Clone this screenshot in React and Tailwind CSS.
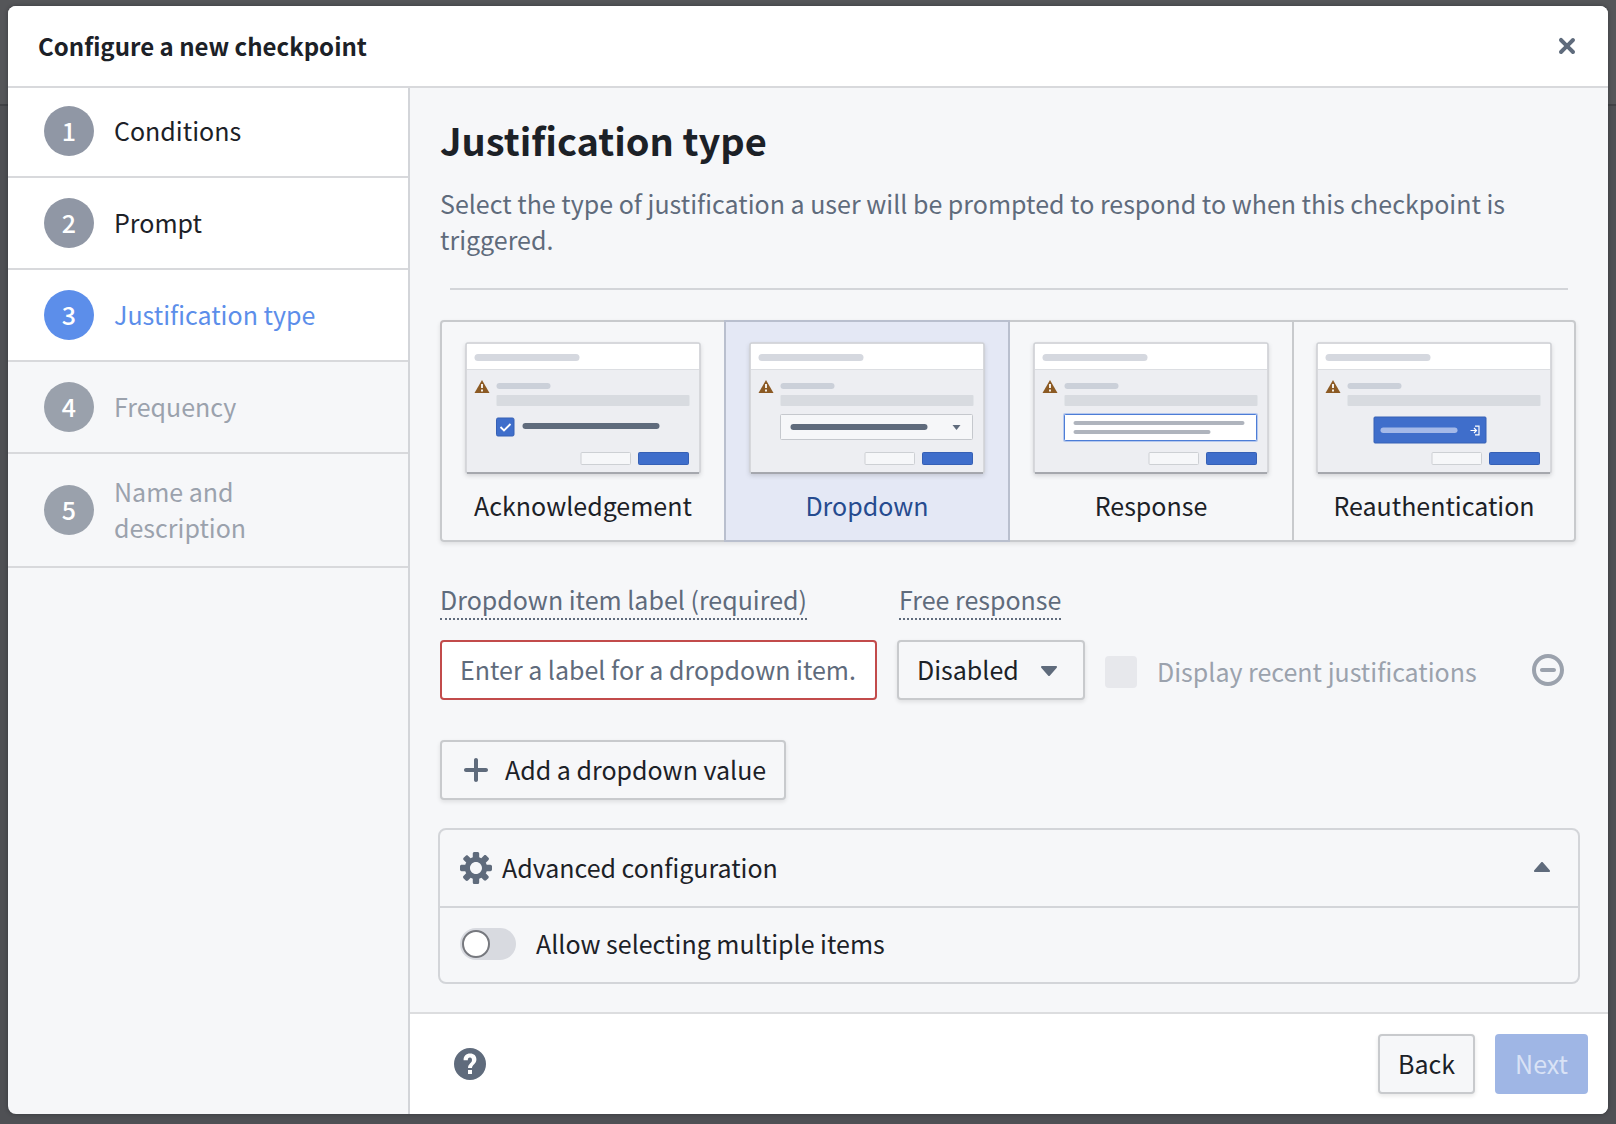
import { useState } from 'react'
import clsx from 'clsx'

const STEPS = [
    { id: 1, title: 'Conditions', status: 'done' },
    { id: 2, title: 'Prompt', status: 'done' },
    { id: 3, title: 'Justification type', status: 'active' },
    { id: 4, title: 'Frequency', status: 'upcoming' },
    { id: 5, title: 'Name and description', status: 'upcoming' },
]

const TYPES = ['Acknowledgement', 'Dropdown', 'Response', 'Reauthentication']

const ICONS = {
    cross: 'M9.41 8l2.29-2.29c.19-.18.3-.43.3-.71a1.003 1.003 0 00-1.71-.71L8 6.59l-2.29-2.3a1.003 1.003 0 00-1.42 1.42L6.59 8 4.3 10.29c-.19.18-.3.43-.3.71a1.003 1.003 0 001.71.71L8 9.41l2.29 2.29c.18.19.43.3.71.3a1.003 1.003 0 00.71-1.71L9.41 8z',
    plus: 'M13 7H9V3c0-.55-.45-1-1-1s-1 .45-1 1v4H3c-.55 0-1 .45-1 1s.45 1 1 1h4v4c0 .55.45 1 1 1s1-.45 1-1V9h4c.55 0 1-.45 1-1s-.45-1-1-1z',
    cog: 'M15.19 6.39h-1.85c-.11-.37-.27-.71-.45-1.04l1.36-1.36c.31-.31.31-.82 0-1.13l-1.13-1.13c-.31-.31-.82-.31-1.13 0l-1.36 1.36c-.33-.17-.67-.33-1.04-.44V.79c0-.44-.36-.8-.8-.8h-1.6c-.44 0-.8.36-.8.8v1.86c-.39.12-.75.28-1.1.47l-1.3-1.3c-.3-.3-.79-.3-1.09 0L1.82 2.91c-.3.3-.3.79 0 1.09l1.3 1.3c-.2.34-.36.7-.48 1.09H.79c-.44 0-.8.36-.8.8v1.6c0 .44.36.8.8.8h1.85c.11.37.27.71.45 1.04l-1.36 1.36c-.31.31-.31.82 0 1.13l1.13 1.13c.31.31.82.31 1.13 0l1.36-1.36c.33.18.67.33 1.04.44v1.86c0 .44.36.8.8.8h1.6c.44 0 .8-.36.8-.8v-1.86c.39-.12.75-.28 1.1-.47l1.3 1.3c.3.3.79.3 1.09 0l1.09-1.09c.3-.3.3-.79 0-1.09l-1.3-1.3c.19-.35.36-.71.48-1.1h1.85c.44 0 .8-.36.8-.8v-1.6a.816.816 0 00-.81-.79zm-7.2 4.6c-1.66 0-3-1.34-3-3s1.34-3 3-3 3 1.34 3 3-1.34 3-3 3z',
    caretDown: 'M12 6.5c0-.28-.22-.5-.5-.5h-7a.495.495 0 00-.37.83l3.5 4c.09.1.22.17.37.17s.28-.07.37-.17l3.5-4c.08-.09.13-.2.13-.33z',
    caretUp: 'M11.87 9.17l-3.5-4C8.28 5.07 8.15 5 8 5s-.28.07-.37.17l-3.5 4a.495.495 0 00.37.83h7a.495.495 0 00.37-.83z',
    remove: 'M10.99 7h-6c-.55 0-1 .45-1 1s.45 1 1 1h6c.55 0 1-.45 1-1s-.45-1-1-1zM8 0C3.58 0 0 3.58 0 8s3.58 8 8 8 8-3.58 8-8-3.58-8-8-8zm0 14c-3.31 0-6-2.69-6-6s2.69-6 6-6 6 2.69 6 6-2.69 6-6 6z',
    help: 'M8 0a8 8 0 100 16A8 8 0 008 0zM7 13v-2h2v2H7zm0-3c0-2.2 2-2.3 2-4 0-.8-.3-1.3-1-1.3-.8 0-1.1.5-1.1 1.4H4.8C4.8 4 6 2.8 8.1 2.8c1.9 0 3.1 1.1 3.1 2.9C11.200 8 9 8.200 9 10H7z',
}

function Icon({ name, className }) {
    return (
        <svg viewBox="0 0 16 16" aria-hidden="true" className={clsx('size-8 shrink-0 fill-current', className)}>
            <path fillRule="evenodd" d={ICONS[name]} />
        </svg>
    )
}

function Preview({ type }) {
    return (
        <svg
            viewBox="0 0 236 132"
            aria-hidden="true"
            className="h-[132px] w-[236px] drop-shadow-[0_2px_2px_rgba(17,20,24,0.15)]"
        >
            <rect x="1" y="1" width="234" height="130" rx="3" fill="#edeef2" />
            <path d="M2 2h232v25H2z" fill="#fff" />
            <path d="M2 27.500h232" stroke="#dcdee2" />
            <rect x="1" y="1" width="234" height="130" rx="2" fill="none" stroke="#cfd1d5" strokeWidth="1.500" />
            <path d="M2 131h232" stroke="#96999f" strokeWidth="1.500" />

            <g transform="translate(-0.5 0)">
                <rect x="10" y="12" width="105" height="7" rx="3.500" fill="#d5d8df" />
                <path d="M17.500 38 25 51H10z" fill="#8c5a24" />
                <path d="M17.500 42v4M17.500 47.500v2" stroke="#fff" strokeWidth="1.800" />
                <rect x="32" y="41" width="54" height="6" rx="3" fill="#cbd0d9" />
                <rect x="32" y="53" width="193" height="11" rx="1" fill="#d8dbe0" />

                {type === 'Acknowledgement' && (
                    <>
                        <rect x="32" y="76" width="17.500" height="18" rx="1.500" fill="#3f6ecb" stroke="#3660b5" />
                        <path d="m36 85 3.500 3.500 6.500-6.500" fill="none" stroke="#fff" strokeWidth="1.800" />
                        <rect x="58" y="81" width="137" height="6" rx="3" fill="#5f6b7c" />
                    </>
                )}
                {type === 'Dropdown' && (
                    <>
                        <rect x="32" y="72.500" width="192" height="25" rx="1" fill="#f6f7f9" stroke="#c5c8cd" />
                        <rect x="42" y="82" width="137" height="6" rx="3" fill="#5f6b7c" />
                        <path d="M204 83h8l-4 5z" fill="#5f6b7c" />
                    </>
                )}
                {type === 'Response' && (
                    <>
                        <rect x="30.500" y="71" width="195" height="29" rx="2" fill="#b5c8ee" />
                        <rect x="32" y="72.500" width="192" height="26" rx="1" fill="#fff" stroke="#4d7dd6" />
                        <rect x="41" y="79" width="171" height="4" rx="2" fill="#afb4bd" />
                        <rect x="41" y="88" width="137" height="4" rx="2" fill="#afb4bd" />
                    </>
                )}
                {type === 'Reauthentication' && (
                    <>
                        <rect x="58.500" y="75" width="112" height="26" rx="1" fill="#3f6ecb" stroke="#3660b5" />
                        <rect x="65" y="85.500" width="77" height="5.500" rx="2.750" fill="#a4b9e8" />
                        <path
                            d="M155 88.500h6m-2.500-2.500 2.500 2.500-2.500 2.500M159.500 84.200h4v8.600h-4"
                            fill="none"
                            stroke="#fff"
                            strokeWidth="1.200"
                        />
                    </>
                )}

                <rect x="116.500" y="110.500" width="49.500" height="12" rx="1" fill="#f6f7f9" stroke="#cdd0d4" />
                <rect x="174" y="110.500" width="50" height="12" rx="1" fill="#3f6ecb" stroke="#3660b5" />
            </g>
        </svg>
    )
}

function Step({ step }) {
    return (
        <li
            className={clsx(
                'flex min-h-[92px] items-center gap-5 border-b-2 border-[#d8d9dc] py-[19px] pl-9 pr-[90px]',
                step.status === 'upcoming' ? 'text-[#9ba2ad]' : 'bg-white',
                step.status === 'active' && 'text-[#5c8eea]',
            )}
            aria-current={step.status === 'active' ? 'step' : undefined}
        >
            <span
                className={clsx(
                    'flex size-[50px] shrink-0 items-center justify-center rounded-full pb-0.5 font-medium text-white',
                    step.status === 'done' && 'bg-[#9097a5]',
                    step.status === 'active' && 'bg-[#5c8eea]',
                    step.status === 'upcoming' && 'bg-[#9aa1ac]',
                )}
            >
                {step.id}
            </span>
            <span className="pb-0.5">{step.title}</span>
        </li>
    )
}

function App() {
    const [selected, setSelected] = useState('Dropdown')
    const [label, setLabel] = useState('')
    const [isOpen, setIsOpen] = useState(true)
    const [isMultiple, setIsMultiple] = useState(false)

    return (
        <div className="relative flex min-h-screen flex-col bg-[#4f5054] px-2 pt-1.5 pb-2.5 font-['Noto_Sans_CJK_SC','Source_Sans_3',sans-serif] text-[25px] leading-9 text-[#1c2127]">
            <div className="absolute inset-x-0 top-0 h-[106px] border-b-2 border-[#414246] bg-[#555659]" />

            <div
                role="dialog"
                aria-labelledby="dialog-title"
                className="relative flex flex-1 flex-col overflow-hidden rounded-lg bg-[#f6f7f9] shadow-[0_0_4px_rgba(17,20,24,0.4)]"
            >
                <header className="relative z-10 flex h-20 items-center justify-between bg-white pl-[30px] pr-[25px] shadow-[0_2px_0_#d8d9dc]">
                    <h1 id="dialog-title" className="text-2xl leading-9 font-bold">Configure a new checkpoint</h1>
                    <button type="button" aria-label="Close" className="text-[#5f6b7c]">
                        <Icon name="cross" />
                    </button>
                </header>

                <div className="flex flex-1">
                    <ol className="w-[402px] shrink-0 border-r-2 border-[#d3d5d9]">
                        {STEPS.map((step) => (
                            <Step key={step.id} step={step} />
                        ))}
                    </ol>

                    <div className="flex min-w-0 flex-1 flex-col">
                        <main className="flex-1 pt-[30px] pr-8 pb-7 pl-[30px]">
                            <h2 className="text-[38px] leading-[48px] font-bold">Justification type</h2>
                            <p className="mt-[21px] text-[#5f6b7c]">
                                Select the type of justification a user will be prompted to respond to when this
                                checkpoint is triggered.
                            </p>
                            <hr className="mt-[31px] mr-2 ml-2.5 border-t-2 border-[#d3d5d9]" />

                            <div className="mt-[30px] grid grid-cols-4 rounded shadow-[0_2px_4px_rgba(17,20,24,0.1)]">
                                {TYPES.map((type) => (
                                    <button
                                        key={type}
                                        type="button"
                                        aria-pressed={type === selected}
                                        onClick={() => setSelected(type)}
                                        className={clsx(
                                            '-mr-0.5 flex flex-col items-center gap-[13px] border-2 pt-5 pb-[17px] first:rounded-l last:mr-0 last:rounded-r',
                                            type === selected
                                                ? 'relative border-[#b9bfce] bg-[#e4e8f5] text-[#264b8f]'
                                                : 'border-[#c8cacd] bg-[#f6f7f9]',
                                        )}
                                    >
                                        <Preview type={type} />
                                        {type}
                                    </button>
                                ))}
                            </div>

                            <div className="mt-10 flex items-end gap-5">
                                <div className="flex flex-col items-start gap-5">
                                    <label
                                        htmlFor="item-label"
                                        className="border-b-2 border-dotted border-[#5f6b7c] pb-0.5 leading-[34px] text-[#5f6b7c]"
                                    >
                                        Dropdown item label (required)
                                    </label>
                                    <input
                                        id="item-label"
                                        type="text"
                                        value={label}
                                        onChange={(event) => setLabel(event.target.value)}
                                        placeholder="Enter a label for a dropdown item."
                                        className="h-[60px] w-[437px] rounded border-2 border-[#c24b4b] bg-white px-[18px] pb-0.5 placeholder:text-[#5f6b7c]"
                                    />
                                </div>
                                <div className="flex flex-col items-start gap-5">
                                    <label
                                        htmlFor="free-response"
                                        className="ml-0.5 border-b-2 border-dotted border-[#5f6b7c] pb-0.5 leading-[34px] text-[#5f6b7c]"
                                    >
                                        Free response
                                    </label>
                                    <div className="relative">
                                        <select
                                            id="free-response"
                                            className="h-[60px] w-[188px] appearance-none rounded border-2 border-[#c8cacd] bg-[#f6f7f9] pb-0.5 pl-[18px] shadow-[0_2px_4px_rgba(17,20,24,0.1)]"
                                        >
                                            <option>Disabled</option>
                                            <option>Enabled</option>
                                        </select>
                                        <Icon
                                            name="caretDown"
                                            className="pointer-events-none absolute top-3.5 right-5 text-[#5f6b7c]"
                                        />
                                    </div>
                                </div>
                                <label className="flex h-[60px] items-center gap-5 pt-1 text-[#9ba2ad]">
                                    <input
                                        type="checkbox"
                                        disabled
                                        className="size-8 appearance-none rounded bg-[#e7e8ec]"
                                    />
                                    <span className="pb-0.5">Display recent justifications</span>
                                </label>
                                <button
                                    type="button"
                                    aria-label="Remove item"
                                    className="mr-3 ml-auto flex h-[60px] items-center text-[#9ba2ad]"
                                >
                                    <Icon name="remove" />
                                </button>
                            </div>

                            <button
                                type="button"
                                className="mt-10 flex h-[60px] items-center gap-[13px] rounded border-2 border-[#c8cacd] bg-[#f6f7f9] px-[18px] shadow-[0_2px_4px_rgba(17,20,24,0.1)]"
                            >
                                <Icon name="plus" className="text-[#5f6b7c]" />
                                <span className="pb-0.5">Add a dropdown value</span>
                            </button>

                            <section className="mt-7 -mr-1 -ml-0.5 rounded-lg border-2 border-[#d3d5d9]">
                                <button
                                    type="button"
                                    aria-expanded={isOpen}
                                    onClick={() => setIsOpen(!isOpen)}
                                    className="flex h-[76px] w-full items-center gap-2.5 px-5"
                                >
                                    <Icon name="cog" className="text-[#5f6b7c]" />
                                    <span className="pb-0.5">Advanced configuration</span>
                                    <Icon name={isOpen ? 'caretUp' : 'caretDown'} className="ml-auto text-[#5f6b7c]" />
                                </button>
                                {isOpen ? (
                                    <label className="flex h-[76px] items-center gap-5 border-t-2 border-[#d3d5d9] px-5 pb-0.5">
                                        <input
                                            type="checkbox"
                                            role="switch"
                                            checked={isMultiple}
                                            onChange={(event) => setIsMultiple(event.target.checked)}
                                            className="h-8 w-14 appearance-none rounded-full bg-[#d8dae0] p-0.5 before:block before:size-7 before:rounded-full before:border-2 before:border-[#76787e] before:bg-white checked:bg-[#3f6ecb] checked:before:translate-x-6"
                                        />
                                        <span className="pb-0.5">Allow selecting multiple items</span>
                                    </label>
                                ) : null}
                            </section>
                        </main>

                        <footer className="flex items-center gap-5 border-t-2 border-[#dcdddf] bg-white py-5 pr-5 pl-11">
                            <button type="button" aria-label="Help" className="mr-auto text-[#5f6b7c]">
                                <Icon name="help" />
                            </button>
                            <button
                                type="button"
                                className="h-[60px] rounded border-2 border-[#c8cacd] bg-[#f6f7f9] px-[18px] pb-0.5 shadow-[0_2px_4px_rgba(17,20,24,0.1)]"
                            >
                                Back
                            </button>
                            <button
                                type="button"
                                disabled
                                className="h-[60px] rounded bg-[#9fb6e5] px-5 pb-0.5 text-[#d9e2f5]"
                            >
                                Next
                            </button>
                        </footer>
                    </div>
                </div>
            </div>
        </div>
    )
}

export default App
